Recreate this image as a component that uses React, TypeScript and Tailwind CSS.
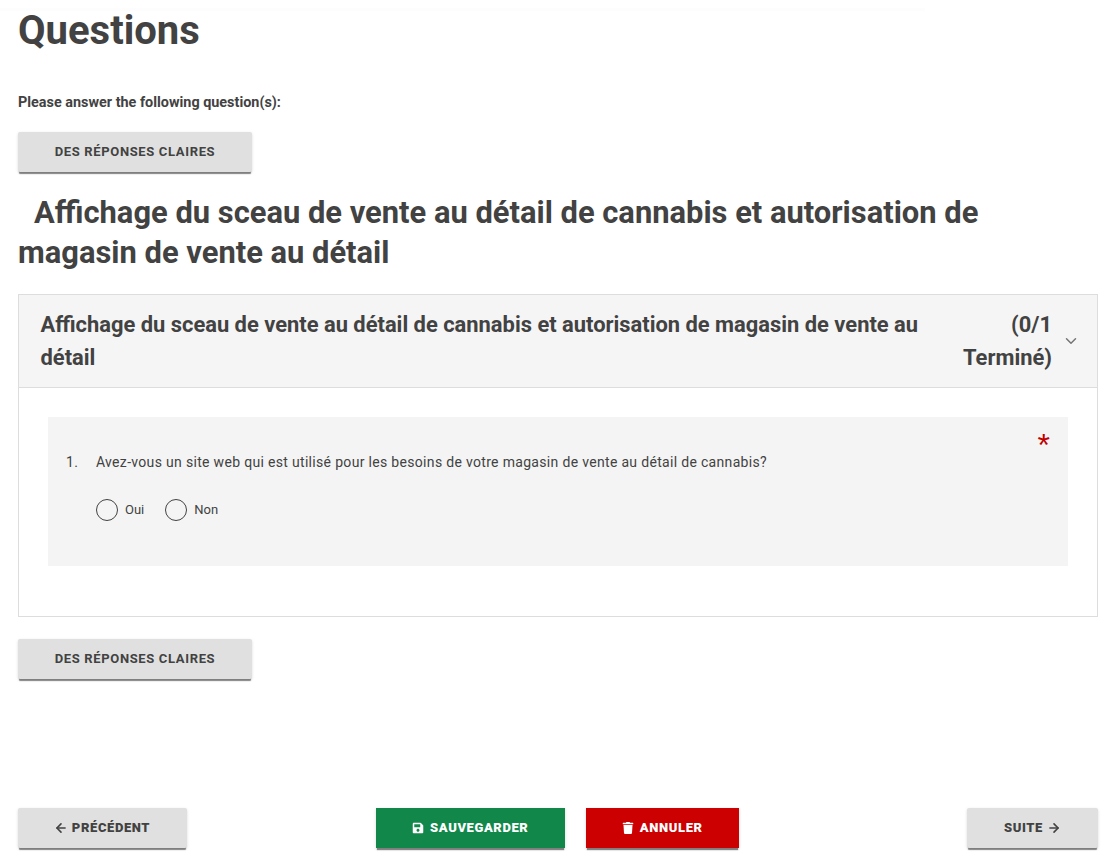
import { ArrowLeft, ArrowRight, ChevronDown } from "lucide-react";
import { FaSave, FaTrash } from "react-icons/fa";

const btnShadow = "shadow-[0_3px_1px_-1px_rgba(0,0,0,0.45),0_1px_3px_rgba(0,0,0,0.15)]";

function ClearButton() {
  return (
    <button
      type="button"
      className={`w-[234px] h-[40px] bg-[#e0e0e0] text-[#424242] text-[13px] font-bold tracking-[0.65px] rounded-[2px] ${btnShadow}`}
    >
      DES RÉPONSES CLAIRES
    </button>
  );
}

function Radio({ label }: { label: string }) {
  return (
    <label className="flex items-center gap-[7px] text-[13px] text-[#424242]">
      <span className="w-[22px] h-[22px] rounded-full border border-[#424242]" />
      {label}
    </label>
  );
}

export default function App() {
  return (
    <div className="w-[1115px] h-[862px] bg-white px-[18px] pr-[17px] pt-[8px] text-[#424242] font-['Roboto',sans-serif] overflow-hidden">
      <div className="h-[3px] w-[925px] -ml-[18px] bg-[#fdfdfd]" />

      <h1 className="text-[40px] leading-[44px] font-bold -mt-[2px]">Questions</h1>

      <p className="text-[14.4px] leading-[20px] font-bold mt-[40px]">Please answer the following question(s):</p>

      <div className="mt-[19px]">
        <ClearButton />
      </div>

      <h2 className="text-[30.9px] leading-[40px] font-bold mt-[21px] indent-[16px]">
        Affichage du sceau de vente au détail de cannabis et autorisation de magasin de vente au détail
      </h2>

      <section className="mt-[21px] border border-[#dddddd]">
        <div className="flex items-center bg-[#f5f5f5] border-b border-[#dddddd] pl-[21.5px] pr-[17px] h-[93px]">
          <div className="w-[890px] text-[21.9px] leading-[33px] font-bold">
            Affichage du sceau de vente au détail de cannabis et autorisation de magasin de vente au détail
          </div>
          <div className="flex-1 text-right text-[21.9px] leading-[33px] font-bold">(0/1 Terminé)</div>
          <ChevronDown className="w-[18px] h-[18px] ml-[10px] -mt-[1px] text-[#757575]" />
        </div>
        <div className="px-[29px] pt-[29px] pb-[50px]">
          <div className="relative bg-[#f4f4f4] h-[149px] pl-[18px] pt-[36px]">
            <span className="absolute right-[18px] top-[8px] text-[#c00000] text-[32px] leading-[40px] font-['Liberation_Sans',sans-serif]">*</span>
            <div className="flex text-[14px] leading-[18px] tracking-[0.32px]">
              <span className="w-[30px]">1.</span>
              <span>Avez-vous un site web qui est utilisé pour les besoins de votre magasin de vente au détail de cannabis?</span>
            </div>
            <div className="flex gap-[21px] mt-[28px] ml-[30px]">
              <Radio label="Oui" />
              <Radio label="Non" />
            </div>
          </div>
        </div>
      </section>

      <div className="mt-[22px]">
        <ClearButton />
      </div>

      <div className="flex justify-between items-center mt-[129px] -ml-[0.5px]">
        <button
          type="button"
          className={`w-[169px] h-[40px] bg-[#e0e0e0] flex items-center justify-center gap-[4px] text-[13px] font-black tracking-[0.6px] rounded-[2px] ${btnShadow}`}
        >
          <ArrowLeft className="w-[14px] h-[14px]" strokeWidth={2.75} />
          PRÉCÉDENT
        </button>
        <div className="flex gap-[21px] mr-[39px]">
          <button
            type="button"
            className={`w-[189px] h-[40px] bg-[#11884a] text-white flex items-center justify-center gap-[6px] text-[13px] font-black tracking-[0.6px] ${btnShadow}`}
          >
            <FaSave className="w-[12px] h-[12px]" />
            SAUVEGARDER
          </button>
          <button
            type="button"
            className={`w-[153px] h-[40px] bg-[#cc0000] text-white flex items-center justify-center gap-[6px] text-[13px] font-black tracking-[0.6px] ${btnShadow}`}
          >
            <FaTrash className="w-[12px] h-[12px]" />
            ANNULER
          </button>
        </div>
        <button
          type="button"
          className={`w-[131px] h-[40px] bg-[#e0e0e0] flex items-center justify-center gap-[4px] text-[13px] font-black tracking-[0.6px] rounded-[2px] ${btnShadow}`}
        >
          SUITE
          <ArrowRight className="w-[14px] h-[14px]" strokeWidth={2.75} />
        </button>
      </div>
    </div>
  );
}
